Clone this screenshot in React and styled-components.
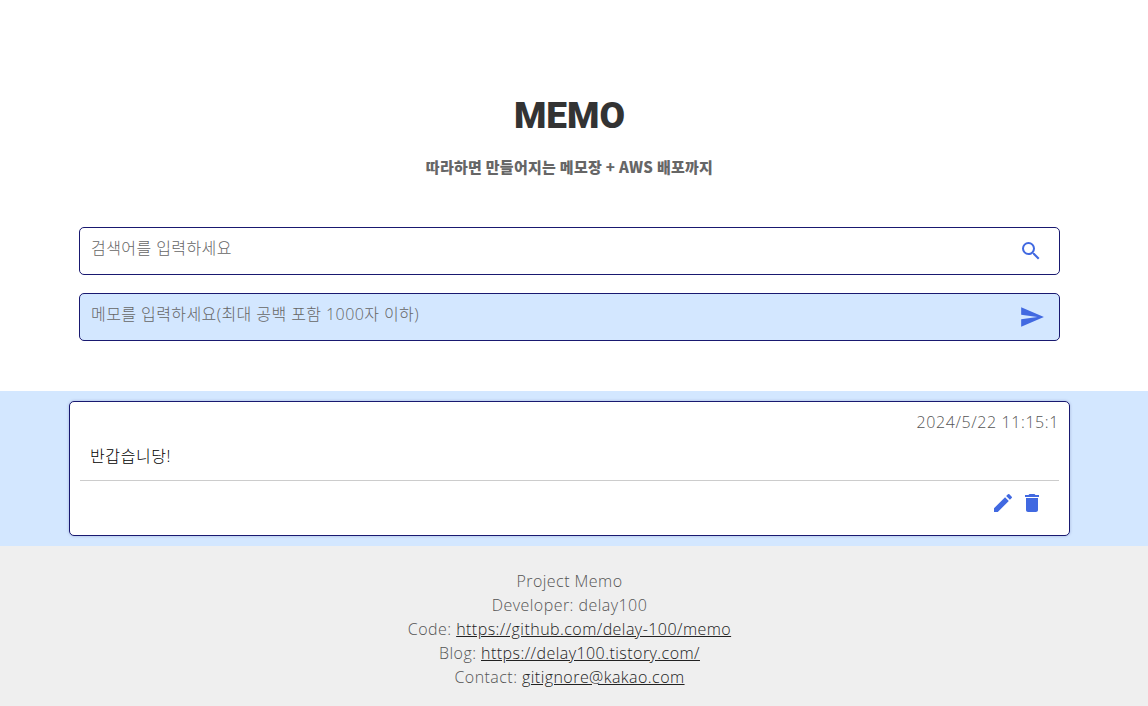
import React from "react";
import styled, { createGlobalStyle } from "styled-components";
import { MdSearch, MdSend, MdEdit, MdDelete } from "react-icons/md";

const bodyFont = `"Open Sans", "Noto Sans CJK KR", sans-serif`;

const GlobalStyle = createGlobalStyle`
  html, body {
    margin: 0;
    padding: 0;
    background: #fff;
    font-family: ${bodyFont};
  }
  * {
    box-sizing: border-box;
  }
`;

const Header = styled.header`
  height: 227px;
  padding: 92px 9px 0 0;
  text-align: center;
`;

const Title = styled.h1`
  margin: 0;
  height: 48px;
  font-family: "Roboto", "Noto Sans CJK KR", sans-serif;
  font-size: 37px;
  line-height: 48px;
  font-weight: 900;
  font-stretch: 88%;
  letter-spacing: 0;
  color: #333;
`;

const Subtitle = styled.h2`
  margin: 15px 0 0;
  font-family: "Noto Sans CJK KR", sans-serif;
  font-size: 15px;
  line-height: 24px;
  font-weight: 900;
  letter-spacing: 0.27px;
  color: #666;
`;

const Forms = styled.div`
  height: 164px;
  padding: 0 88px 0 79px;
  display: flex;
  flex-direction: column;
  gap: 18px;
`;

const InputBox = styled.form`
  height: 48px;
  display: flex;
  align-items: center;
  padding: 0 16px 0 11px;
  border: 1px solid #191970;
  border-radius: 5px;
  background: ${({ $fill }) => $fill || "#fff"};
`;

const Field = styled.textarea`
  flex: 1;
  height: 46px;
  padding: 8px 0 0;
  border: none;
  outline: none;
  resize: none;
  background: transparent;
  font-family: ${bodyFont};
  font-size: 16px;
  font-weight: 300;
  line-height: 24px;
  letter-spacing: 0.42px;
  color: #333;

  &::placeholder {
    color: #666;
    opacity: 1;
  }
`;

const IconButton = styled.button`
  display: flex;
  padding: 0;
  margin-right: ${({ $nudge }) => $nudge || 0}px;
  border: none;
  background: none;
  color: #4169e1;
  font-size: ${({ $size }) => $size || 24}px;
`;

const MemoSection = styled.section`
  height: 155px;
  padding: 10px 78px 10px 69px;
  background: #d3e7ff;
`;

const MemoCard = styled.article`
  height: 135px;
  padding: 0 10px;
  border: 1px solid #191970;
  border-radius: 5px;
  background: #fff;
  box-shadow: 0 0 3px rgba(25, 25, 112, 0.25);
`;

const MemoDate = styled.div`
  padding-top: 8px;
  text-align: right;
  font-family: ${bodyFont};
  font-size: 16px;
  font-weight: 300;
  line-height: 24px;
  letter-spacing: 0.6px;
  color: #555;
`;

const MemoText = styled.p`
  margin: 0;
  height: 47px;
  padding: 10px 10px 0;
  font-family: ${bodyFont};
  font-size: 16px;
  font-weight: 300;
  line-height: 24px;
  letter-spacing: 0.6px;
  color: #000;
  border-bottom: 1px solid #ccc;
`;

const MemoActions = styled.div`
  display: flex;
  justify-content: flex-end;
  gap: 5px;
  padding: 10px 15px 0 0;
`;

const Footer = styled.footer`
  height: 160px;
  padding: 23px 9px 0 0;
  background: #efefef;
  text-align: center;
  font-family: ${bodyFont};
  font-size: 16px;
  font-weight: 300;
  line-height: 24px;
  letter-spacing: 0.45px;
  color: #555;
`;

const FooterLine = styled.div`
  height: 24px;
`;

const FooterLink = styled.a`
  color: #222;
  text-decoration: underline;
`;

export default function App() {
  return (
    <>
      <GlobalStyle />
      <Header>
        <Title>MEMO</Title>
        <Subtitle>따라하면 만들어지는 메모장 + AWS 배포까지</Subtitle>
      </Header>
      <Forms>
        <InputBox>
          <Field placeholder="검색어를 입력하세요" />
          <IconButton type="button"><MdSearch /></IconButton>
        </InputBox>
        <InputBox $fill="#d3e7ff">
          <Field placeholder="메모를 입력하세요(최대 공백 포함 1000자 이하)" />
          <IconButton type="button" $size={26} $nudge={-2}><MdSend /></IconButton>
        </InputBox>
      </Forms>
      <MemoSection>
        <MemoCard>
          <MemoDate>2024/5/22 11:15:1</MemoDate>
          <MemoText>반갑습니당!</MemoText>
          <MemoActions>
            <IconButton type="button"><MdEdit /></IconButton>
            <IconButton type="button"><MdDelete /></IconButton>
          </MemoActions>
        </MemoCard>
      </MemoSection>
      <Footer>
        <FooterLine>Project Memo</FooterLine>
        <FooterLine>Developer: delay100</FooterLine>
        <FooterLine>Code: <FooterLink href="#">https://github.com/delay-100/memo</FooterLink></FooterLine>
        <FooterLine>Blog: <FooterLink href="#">https://delay100.tistory.com/</FooterLink></FooterLine>
        <FooterLine>Contact: <FooterLink href="#">gitignore@kakao.com</FooterLink></FooterLine>
      </Footer>
    </>
  );
}
